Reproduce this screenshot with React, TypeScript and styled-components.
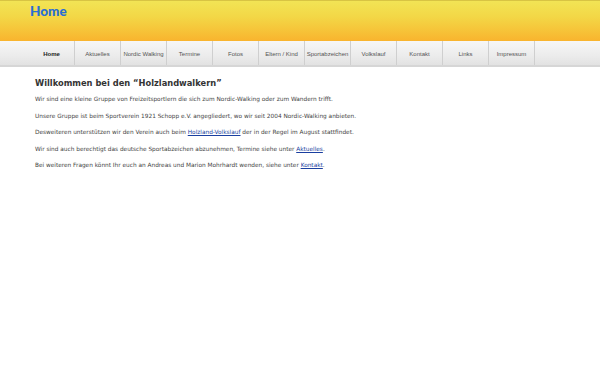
import React from "react";
import styled, { createGlobalStyle } from "styled-components";

const Global = createGlobalStyle`
  html, body { margin: 0; padding: 0; background: #ffffff; }
  body { font-family: "DejaVu Sans", Verdana, sans-serif; }
`;

const Header = styled.header`
  height: 41px;
  background: linear-gradient(#f2e455 0%, #f3d746 40%, #f9b42e 100%);
  border-top: 1px solid #d8c443;
  box-sizing: border-box;
  padding: 2px 0 0 30px;
`;

const SiteTitle = styled.h1`
  margin: 0;
  font-family: Lato, "Open Sans", sans-serif;
  font-weight: 900;
  font-size: 13.5px;
  line-height: 17px;
  color: #2a6ed4;
`;

const NavBar = styled.nav`
  height: 24px;
  background: linear-gradient(#f6f6f6 0%, #ececec 60%, #e2e2e2 100%);
  border-bottom: 2px solid #d6d6d6;
  display: flex;
  padding-left: 29px;
`;

const NavItem = styled.a<{ $active?: boolean }>`
  width: 46px;
  display: flex;
  align-items: center;
  justify-content: center;
  border-right: 1px solid #cfcfcf;
  box-sizing: border-box;
  font-family: "Liberation Sans", Arial, sans-serif;
  font-size: 6px;
  padding-top: 1px;
  color: ${(p) => (p.$active ? "#222" : "#555")};
  font-weight: ${(p) => (p.$active ? "bold" : "normal")};
  text-decoration: none;
  white-space: nowrap;
`;

const Content = styled.main`
  padding: 11px 0 0 35px;
`;

const Heading = styled.h2`
  margin: 0 0 8px 0;
  font-family: "DejaVu Sans", Verdana, sans-serif;
  font-weight: bold;
  font-size: 8.3px;
  color: #333;
`;

const Para = styled.p`
  margin: 0 0 10px 0;
  font-size: 5.8px;
  line-height: 6.5px;
  color: #444;
`;

const Link = styled.a`
  color: #1a3fa0;
  text-decoration: underline;
`;

const items = [
  "Home",
  "Aktuelles",
  "Nordic Walking",
  "Termine",
  "Fotos",
  "Eltern / Kind",
  "Sportabzeichen",
  "Volkslauf",
  "Kontakt",
  "Links",
  "Impressum",
];

export default function App() {
  return (
    <>
      <Global />
      <Header>
        <SiteTitle>Home</SiteTitle>
      </Header>
      <NavBar>
        {items.map((it, i) => (
          <NavItem key={it} $active={i === 0} href="#">
            {it}
          </NavItem>
        ))}
      </NavBar>
      <Content>
        <Heading>Willkommen bei den “Holzlandwalkern”</Heading>
        <Para>
          Wir sind eine kleine Gruppe von Freizeitsportlern die sich zum Nordic-Walking oder zum Wandern trifft.
        </Para>
        <Para>
          Unsere Gruppe ist beim Sportverein 1921 Schopp e.V. angegliedert, wo wir seit 2004 Nordic-Walking anbieten.
        </Para>
        <Para>
          Desweiteren unterstützen wir den Verein auch beim <Link href="#">Holzland-Volkslauf</Link> der in der Regel im August stattfindet.
        </Para>
        <Para>
          Wir sind auch berechtigt das deutsche Sportabzeichen abzunehmen, Termine siehe unter <Link href="#">Aktuelles</Link>.
        </Para>
        <Para>
          Bei weiteren Fragen könnt Ihr euch an Andreas und Marion Mohrhardt wenden, siehe unter <Link href="#">Kontakt</Link>.
        </Para>
      </Content>
    </>
  );
}
